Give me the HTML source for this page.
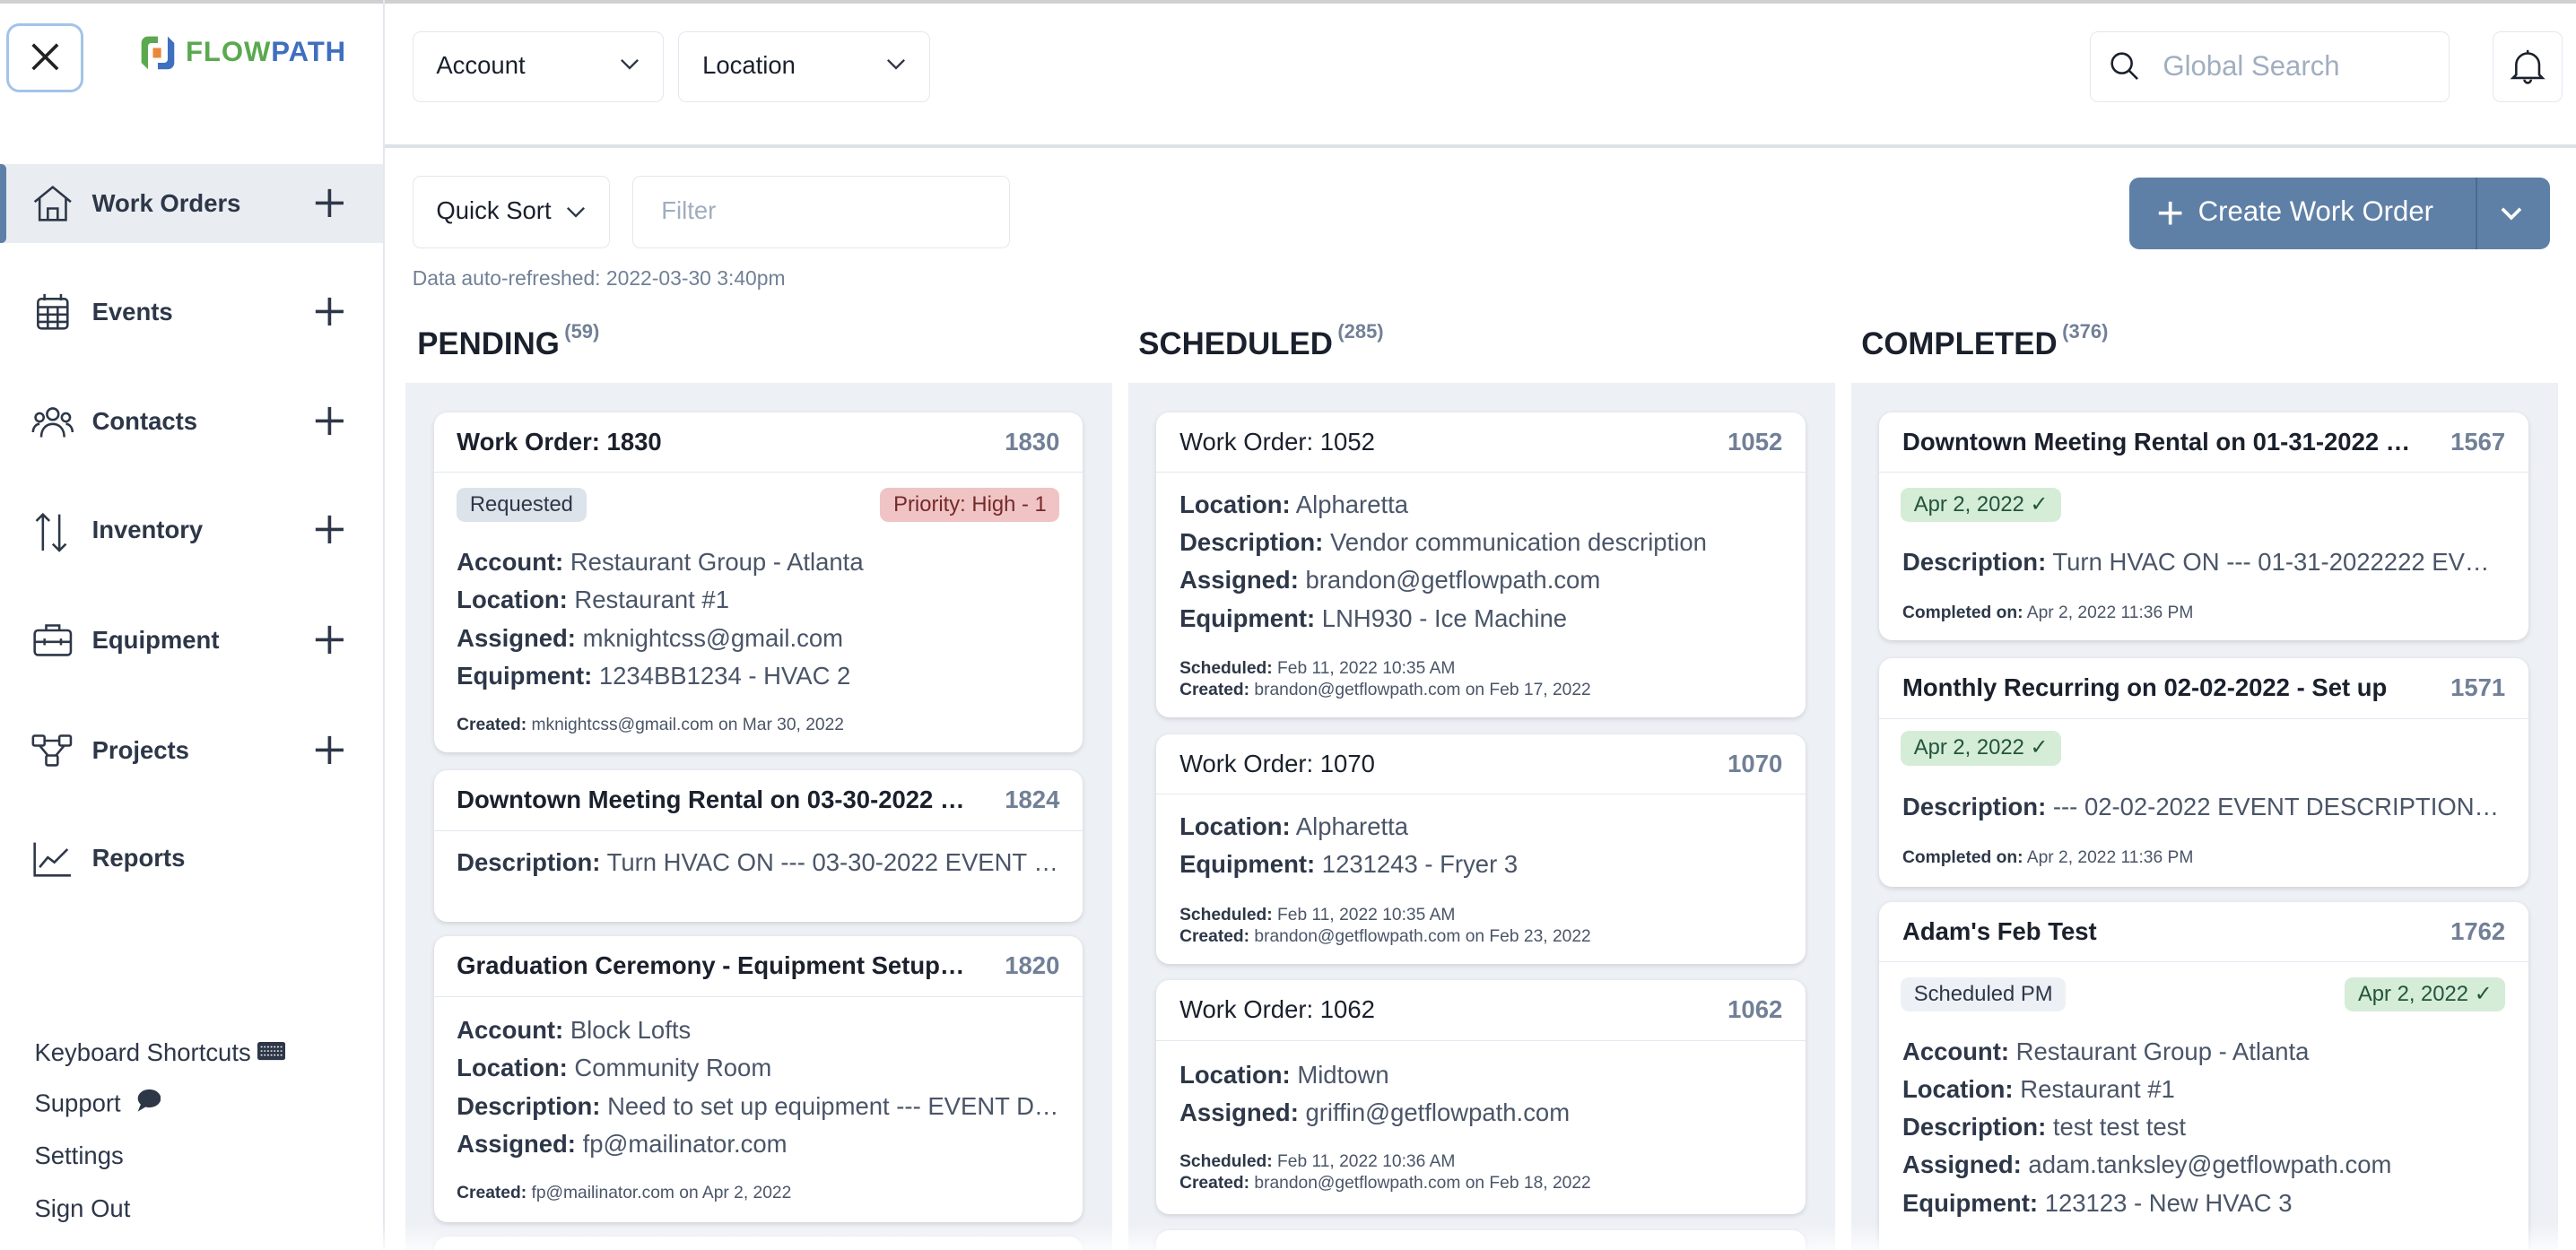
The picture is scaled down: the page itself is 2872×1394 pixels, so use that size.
<!DOCTYPE html>
<html><head><meta charset="utf-8"><style>
*{box-sizing:border-box;margin:0;padding:0}
html,body{width:2872px;height:1394px;overflow:hidden;background:#fff}
#w{zoom:1.8316;width:1568px;height:761px;position:relative;font-family:"Liberation Sans",sans-serif;color:#2d3748;overflow:hidden}
.a{position:absolute}
.box{position:absolute;border:1px solid #e2e8f0;border-radius:5px;background:#fff}
.dd{font-size:15px;line-height:40px;padding-left:14px;color:#1a202c}
.chev{position:absolute;right:14px;top:16px}
.nav{position:absolute;left:0;width:233px;height:48px;font-size:15px;font-weight:bold;color:#2d3748}
.nav span{position:absolute;left:56px;top:15px}
.nav svg.i{position:absolute;left:19px;top:12px}
.nav .p{position:absolute;left:191px;top:14px}
.col{position:absolute;top:233px;width:430px;height:540px;background:#edf0f5}
.ch{position:absolute;top:199px;font-size:19px;font-weight:bold;color:#1a202c}
.ch sup{font-size:12px;color:#718096;vertical-align:top;position:relative;top:-4px;margin-left:3px}
.c{position:absolute;background:#fff;border-radius:8px;box-shadow:0 1px 3px rgba(0,0,0,.13);width:395px;overflow:hidden}
.h{position:absolute;left:0;right:0;top:0;height:37px;border-bottom:1px solid #e2e8f0}
.t{position:absolute;left:14px;right:70px;top:0;line-height:36px;font-size:15px;font-weight:bold;color:#1a202c;white-space:nowrap;overflow:hidden;text-overflow:ellipsis}
.n{position:absolute;right:14px;top:0;line-height:36px;font-size:15px;font-weight:bold;color:#718096}
.l{position:absolute;left:14px;right:14px;font-size:15px;line-height:23px;color:#4a5568;white-space:nowrap;overflow:hidden;text-overflow:ellipsis}
.l b{color:#2d3748}
.s{position:absolute;left:14px;font-size:10.5px;line-height:13px;color:#4a5568;white-space:nowrap}
.s b{color:#2d3748}
.bg{position:absolute;height:21px;line-height:21px;font-size:13px;padding:0 8px;border-radius:5px}
.g{background:#d5ecd7;color:#22543d}
.gr{background:#dde3ea;color:#2d3748}
.sb{position:absolute;left:21px;font-size:15px;color:#2d3748}
</style></head><body><div id="w">
<div class="a" style="left:0;top:0;width:1568px;height:2px;background:#d0d0d0"></div>
<div class="a" style="left:233px;top:0;width:1px;height:761px;background:#e2e8f0"></div>
<div class="a" style="left:4px;top:14px;width:47px;height:42px;border:2px solid #a3c4e8;border-radius:8px"></div>
<svg class="a" style="left:18px;top:25px" width="19" height="19" viewBox="0 0 19 19"><path d="M2 2L17 17M17 2L2 17" stroke="#222" stroke-width="2"/></svg>
<svg class="a" style="left:84px;top:20px" width="24" height="24" viewBox="0 0 24 24"><path d="M12 2H6a4 4 0 0 0-4 4v12l4 4V8a2 2 0 0 1 2-2h4z" fill="#5aa94f"/><path d="M12 22h6a4 4 0 0 0 4-4V6l-4-4v14a2 2 0 0 1-2 2h-4z" fill="#3f6fbf"/><rect x="9" y="9" width="5" height="6" fill="#e9873a"/></svg>
<div class="a" style="left:113px;top:22px;font-size:17px;font-weight:bold;letter-spacing:0.5px;color:#5aa94f">FLOW<span style="color:#3f6fbf">PATH</span></div>
<div class="nav" style="top:100px;background:#e9edf2"><div class="a" style="left:0;top:0;width:4px;height:48px;background:#5f80a6;border-radius:0 3px 3px 0"></div><svg class="i" width="26" height="24" viewBox="0 0 26 24" fill="none" stroke="#2d3748" stroke-width="1.4"><path d="M2 11L13 2l11 9M5 9v13h16V9M10 22v-7h6v7"/></svg><span>Work Orders</span><svg class="p" width="19" height="19"><path d="M9.5 1v17M1 9.5h17" stroke="#2d3748" stroke-width="2"/></svg></div>
<div class="nav" style="top:166px"><svg class="i" width="26" height="24" viewBox="0 0 26 24" fill="none" stroke="#2d3748" stroke-width="1.4"><rect x="4" y="4" width="18" height="18" rx="2"/><path d="M4 9h18M4 13.5h18M4 18h18M10 9v13M16 9v13M8 1v4M18 1v4"/></svg><span>Events</span><svg class="p" width="19" height="19"><path d="M9.5 1v17M1 9.5h17" stroke="#2d3748" stroke-width="2"/></svg></div>
<div class="nav" style="top:233px"><svg class="i" width="26" height="24" viewBox="0 0 26 24" fill="none" stroke="#2d3748" stroke-width="1.4"><circle cx="13" cy="7" r="3.5"/><circle cx="5" cy="9" r="2.5"/><circle cx="21" cy="9" r="2.5"/><path d="M6 21c0-5 3-8 7-8s7 3 7 8M1 18c0-3 2-5 4-5M25 18c0-3-2-5-4-5"/></svg><span>Contacts</span><svg class="p" width="19" height="19"><path d="M9.5 1v17M1 9.5h17" stroke="#2d3748" stroke-width="2"/></svg></div>
<div class="nav" style="top:299px"><svg class="i" width="26" height="26" viewBox="0 0 26 26" fill="none" stroke="#2d3748" stroke-width="1.4"><path d="M7 24V2M3 6l4-4 4 4M17 2v22M13 20l4 4 4-4"/></svg><span>Inventory</span><svg class="p" width="19" height="19"><path d="M9.5 1v17M1 9.5h17" stroke="#2d3748" stroke-width="2"/></svg></div>
<div class="nav" style="top:366px"><svg class="i" width="26" height="24" viewBox="0 0 26 24" fill="none" stroke="#2d3748" stroke-width="1.4"><rect x="2" y="6" width="22" height="15" rx="2"/><path d="M9 6V3h8v3M2 13h22M8 11v4M18 11v4"/></svg><span>Equipment</span><svg class="p" width="19" height="19"><path d="M9.5 1v17M1 9.5h17" stroke="#2d3748" stroke-width="2"/></svg></div>
<div class="nav" style="top:433px"><svg class="i" width="26" height="24" viewBox="0 0 26 24" fill="none" stroke="#2d3748" stroke-width="1.4"><rect x="1" y="3" width="7" height="6" rx="1"/><rect x="17" y="3" width="7" height="6" rx="1"/><rect x="9" y="15" width="7" height="6" rx="1"/><path d="M8 6h9M5 9l5 6M20 9l-5 6"/></svg><span>Projects</span><svg class="p" width="19" height="19"><path d="M9.5 1v17M1 9.5h17" stroke="#2d3748" stroke-width="2"/></svg></div>
<div class="nav" style="top:499px"><svg class="i" width="26" height="24" viewBox="0 0 26 24" fill="none" stroke="#2d3748" stroke-width="1.4"><path d="M2 2v20h22M5 17l5-6 4 3 8-8"/></svg><span>Reports</span></div>
<div class="sb" style="top:632px">Keyboard Shortcuts <svg width="17" height="11" style="vertical-align:0"><rect width="17" height="11" rx="1.5" fill="#2d3748"/><path d="M2 3h13M2 5.5h13M2 8h13" stroke="#fff" stroke-width=".8" stroke-dasharray="1 1"/></svg></div>
<div class="sb" style="top:663px">Support &nbsp;<svg width="16" height="14"><ellipse cx="9" cy="6" rx="7" ry="5.5" fill="#2d3748"/><path d="M2 14l2-5 3 2z" fill="#2d3748"/></svg></div>
<div class="sb" style="top:695px">Settings</div>
<div class="sb" style="top:727px">Sign Out</div>
<div class="box dd" style="left:251px;top:19px;width:153px;height:43px">Account<svg class="chev" width="12" height="8"><path d="M1 1l5 5 5-5" fill="none" stroke="#2d3748" stroke-width="1.3"/></svg></div>
<div class="box dd" style="left:413px;top:19px;width:153px;height:43px">Location<svg class="chev" width="12" height="8"><path d="M1 1l5 5 5-5" fill="none" stroke="#2d3748" stroke-width="1.3"/></svg></div>
<div class="box" style="left:1272px;top:19px;width:219px;height:43px"><svg class="a" style="left:11px;top:11px" width="20" height="20" fill="none" stroke="#1a202c" stroke-width="1.4"><circle cx="8" cy="8" r="6"/><path d="M12.5 12.5l5 5"/></svg><div class="a" style="left:44px;top:11px;font-size:17px;color:#a0aec0">Global Search</div></div>
<div class="box" style="left:1517px;top:19px;width:43px;height:43px"><svg class="a" style="left:10px;top:10px" width="22" height="22" fill="none" stroke="#1a202c" stroke-width="1.4"><path d="M4 16V10a7 7 0 0 1 14 0v6l2 2H2zM11 1v2M9 19a2 2 0 0 0 4 0"/></svg></div>
<div class="a" style="left:234px;top:88px;width:1334px;height:2px;background:#dde2e8"></div>
<div class="box dd" style="left:251px;top:107px;width:120px;height:44px;line-height:42px">Quick Sort<svg class="chev" style="top:18px" width="12" height="8"><path d="M1 1l5 5 5-5" fill="none" stroke="#2d3748" stroke-width="1.3"/></svg></div>
<div class="box dd" style="left:385px;top:107px;width:230px;height:44px;line-height:42px;color:#a0aec0;padding-left:17px">Filter</div>
<div class="a" style="left:251px;top:162px;font-size:12.5px;color:#718096">Data auto-refreshed: 2022-03-30 3:40pm</div>
<div class="a" style="left:1296px;top:108px;width:256px;height:44px;background:#5f80a6;border-radius:6px;color:#fff"><svg class="a" style="left:17px;top:14px" width="16" height="16"><path d="M8 1v14M1 8h14" stroke="#fff" stroke-width="2"/></svg><div class="a" style="left:42px;top:11px;font-size:17px">Create Work Order</div><div class="a" style="left:211px;top:0;width:1px;height:44px;background:#4a6a8e"></div><svg class="a" style="left:226px;top:18px" width="13" height="9"><path d="M1 1l5.5 5.5L12 1" fill="none" stroke="#fff" stroke-width="2"/></svg></div>
<div class="ch" style="left:254px">PENDING<sup>(59)</sup></div>
<div class="ch" style="left:693px">SCHEDULED<sup>(285)</sup></div>
<div class="ch" style="left:1133px">COMPLETED<sup>(376)</sup></div>
<div class="col" style="left:247px"></div>
<div class="col" style="left:687px"></div>
<div class="col" style="left:1127px"></div>

<div class="c" style="left:264px;top:251px;height:207px"><div class="h"><div class="t">Work Order: 1830</div><div class="n">1830</div></div>
<div class="bg gr" style="left:14px;top:46px">Requested</div><div class="bg" style="right:14px;top:46px;background:#f0c4c4;color:#742a2a">Priority: High - 1</div>
<div class="l" style="top:80px"><b>Account:</b> Restaurant Group - Atlanta</div><div class="l" style="top:103px"><b>Location:</b> Restaurant #1</div><div class="l" style="top:126px"><b>Assigned:</b> mknightcss@gmail.com</div><div class="l" style="top:149px"><b>Equipment:</b> 1234BB1234 - HVAC 2</div>
<div class="s" style="top:184px"><b>Created:</b> mknightcss@gmail.com on Mar 30, 2022</div></div>
<div class="c" style="left:264px;top:469px;height:92px"><div class="h"><div class="t">Downtown Meeting Rental on 03-30-2022 EVENT</div><div class="n">1824</div></div>
<div class="l" style="top:45px"><b>Description:</b> Turn HVAC ON --- 03-30-2022 EVENT DESCRIPTION</div></div>
<div class="c" style="left:264px;top:570px;height:174px"><div class="h"><div class="t">Graduation Ceremony - Equipment Setup for Event</div><div class="n">1820</div></div>
<div class="l" style="top:46px"><b>Account:</b> Block Lofts</div><div class="l" style="top:69px"><b>Location:</b> Community Room</div><div class="l" style="top:92px"><b>Description:</b> Need to set up equipment --- EVENT DESCRIPTION</div><div class="l" style="top:115px"><b>Assigned:</b> fp@mailinator.com</div>
<div class="s" style="top:150px"><b>Created:</b> fp@mailinator.com on Apr 2, 2022</div></div>
<div class="c" style="left:264px;top:753px;height:40px"></div>

<div class="c" style="left:704px;top:251px;height:186px"><div class="h"><div class="t" style="font-weight:normal">Work Order: 1052</div><div class="n">1052</div></div>
<div class="l" style="top:45px"><b>Location:</b> Alpharetta</div><div class="l" style="top:68px"><b>Description:</b> Vendor communication description</div><div class="l" style="top:91px"><b>Assigned:</b> brandon@getflowpath.com</div><div class="l" style="top:114px"><b>Equipment:</b> LNH930 - Ice Machine</div>
<div class="s" style="top:150px"><b>Scheduled:</b> Feb 11, 2022 10:35 AM</div><div class="s" style="top:163px"><b>Created:</b> brandon@getflowpath.com on Feb 17, 2022</div></div>
<div class="c" style="left:704px;top:447px;height:140px"><div class="h"><div class="t" style="font-weight:normal">Work Order: 1070</div><div class="n">1070</div></div>
<div class="l" style="top:45px"><b>Location:</b> Alpharetta</div><div class="l" style="top:68px"><b>Equipment:</b> 1231243 - Fryer 3</div>
<div class="s" style="top:104px"><b>Scheduled:</b> Feb 11, 2022 10:35 AM</div><div class="s" style="top:117px"><b>Created:</b> brandon@getflowpath.com on Feb 23, 2022</div></div>
<div class="c" style="left:704px;top:597px;height:142px"><div class="h"><div class="t" style="font-weight:normal">Work Order: 1062</div><div class="n">1062</div></div>
<div class="l" style="top:46px"><b>Location:</b> Midtown</div><div class="l" style="top:69px"><b>Assigned:</b> griffin@getflowpath.com</div>
<div class="s" style="top:104px"><b>Scheduled:</b> Feb 11, 2022 10:36 AM</div><div class="s" style="top:117px"><b>Created:</b> brandon@getflowpath.com on Feb 18, 2022</div></div>
<div class="c" style="left:704px;top:749px;height:40px"></div>

<div class="c" style="left:1144px;top:251px;height:139px"><div class="h"><div class="t">Downtown Meeting Rental on 01-31-2022 EVENT</div><div class="n">1567</div></div>
<div class="bg g" style="left:13px;top:46px">Apr 2, 2022 ✓</div>
<div class="l" style="top:80px"><b>Description:</b> Turn HVAC ON --- 01-31-2022222 EVENT DESCRIPTION</div>
<div class="s" style="top:116px"><b>Completed on:</b> Apr 2, 2022 11:36 PM</div></div>
<div class="c" style="left:1144px;top:401px;height:139px"><div class="h"><div class="t">Monthly Recurring on 02-02-2022 - Set up</div><div class="n">1571</div></div>
<div class="bg g" style="left:13px;top:44px">Apr 2, 2022 ✓</div>
<div class="l" style="top:79px"><b>Description:</b> --- 02-02-2022 EVENT DESCRIPTION FOR</div>
<div class="s" style="top:115px"><b>Completed on:</b> Apr 2, 2022 11:36 PM</div></div>
<div class="c" style="left:1144px;top:549px;height:230px"><div class="h"><div class="t">Adam's Feb Test</div><div class="n">1762</div></div>
<div class="bg" style="left:13px;top:46px;background:#edf0f5;color:#2d3748">Scheduled PM</div><div class="bg g" style="right:14px;top:46px">Apr 2, 2022 ✓</div>
<div class="l" style="top:80px"><b>Account:</b> Restaurant Group - Atlanta</div><div class="l" style="top:103px"><b>Location:</b> Restaurant #1</div><div class="l" style="top:126px"><b>Description:</b> test test test</div><div class="l" style="top:149px"><b>Assigned:</b> adam.tanksley@getflowpath.com</div><div class="l" style="top:172px"><b>Equipment:</b> 123123 - New HVAC 3</div></div>
<div class="a" style="left:0;top:745px;width:1568px;height:16px;background:linear-gradient(rgba(255,255,255,0),rgba(255,255,255,.8))"></div>
</div></body></html>
